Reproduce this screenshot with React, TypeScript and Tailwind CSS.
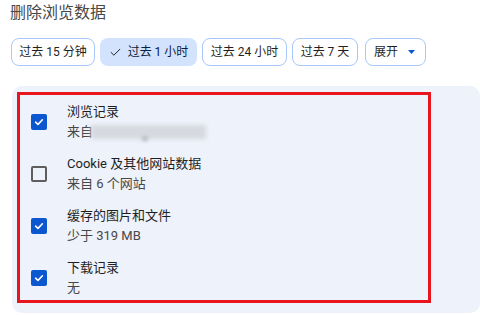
import { Check } from 'lucide-react'

const ranges = [
  { label: '过去 15 分钟', w: 'w-[84px]' },
  { label: '过去 1 小时', w: 'w-[97px]' },
  { label: '过去 24 小时', w: 'w-[85px]' },
  { label: '过去 7 天', w: 'w-[66px]' },
]

const items = [
  { title: '浏览记录', sub: '来自', checked: true, blurred: true },
  { title: 'Cookie 及其他网站数据', sub: '来自 6 个网站', checked: false },
  { title: '缓存的图片和文件', sub: '少于 319 MB', checked: true },
  { title: '下载记录', sub: '无', checked: true },
]

function Box({ checked }: { checked: boolean }) {
  if (!checked) {
    return <span className="w-4 h-4 shrink-0 rounded-[2px] border-2 border-[#5e5e5e]" />
  }
  return (
    <span className="w-4 h-4 shrink-0 rounded-[2px] bg-[#0b57d0] flex items-center justify-center">
      <svg width="10" height="10" viewBox="0 0 10 10" fill="none">
        <path d="M1.6 5.2 L4 7.4 L8.4 2.8" stroke="white" strokeWidth="1.6" strokeLinecap="round" strokeLinejoin="round" />
      </svg>
    </span>
  )
}

export default function App() {
  return (
    <div
      className="w-[480px] h-[315px] bg-white overflow-hidden text-[#1f1f1f]"
      style={{ fontFamily: 'Roboto, "Noto Sans CJK SC", sans-serif' }}
    >
      <h1 className="pl-[10px] pt-[3px] text-[16px] leading-[20px] text-[#474747]">删除浏览数据</h1>

      <div className="flex gap-[5px] pl-[11px] pt-[15px]">
        {ranges.map((r, i) =>
          i === 1 ? (
            <span
              key={r.label}
              className={`${r.w} h-[28px] rounded-[8px] bg-[#d3e3fd] flex items-center justify-center gap-[6px] text-[12px] text-[#0a1d3d]`}
            >
              <Check size={13} strokeWidth={1.8} className="text-[#1f1f1f]" />
              {r.label}
            </span>
          ) : (
            <span
              key={r.label}
              className={`${r.w} h-[28px] rounded-[8px] border border-[#a8c7fa] flex items-center justify-center text-[12px]`}
            >
              {r.label}
            </span>
          )
        )}
        <span className="w-[61px] h-[28px] ml-[2px] pl-[8px] rounded-[8px] border border-[#a8c7fa] flex items-center gap-[10px] text-[12px]">
          展开
          <svg width="7" height="4" viewBox="0 0 7 4">
            <path d="M0 0 L7 0 L3.5 4 Z" fill="#0b57d0" />
          </svg>
        </span>
      </div>

      <div className="mt-[20px] ml-[12px] h-[227px] rounded-[10px] bg-[#eef2fa] pt-[6px] pl-[5px]">
        <div className="w-[414px] h-[211px] border-[3px] border-[#e8151e] pt-[1px]">
          {items.map((it, i) => (
            <div key={i} className="h-[52px] flex items-center gap-[20px] pl-[11px]">
              <Box checked={it.checked} />
              <div className="flex flex-col">
                <span className="text-[13px] leading-[20px] text-[#1f1f1f]">{it.title}</span>
                <span className="text-[13px] leading-[20px] text-[#474747] flex items-center">
                  {it.sub}
                  {it.blurred && (
                    <span className="relative ml-[-2px] w-[115px] h-[14px] bg-[#d6d9df] blur-[2px]">
                      <span className="absolute left-[52px] bottom-[-1px] w-[4px] h-[2px] bg-[#555]" />
                    </span>
                  )}
                </span>
              </div>
            </div>
          ))}
        </div>
      </div>
    </div>
  )
}
